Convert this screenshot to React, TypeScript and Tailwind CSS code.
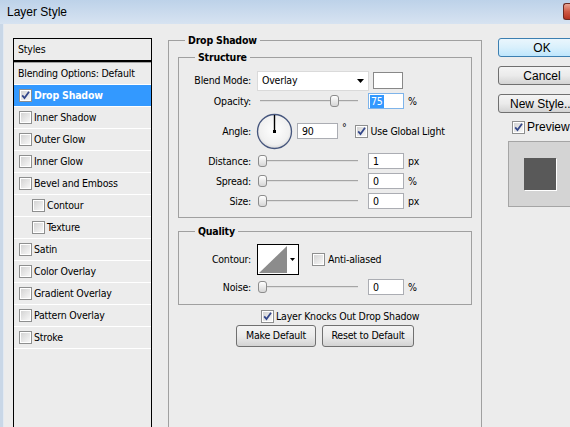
import React from "react";

const F = "font-['DejaVu_Sans_Condensed','Liberation_Sans',Arial,sans-serif]";
const FB = "font-['Liberation_Sans',Arial,sans-serif]";

function Check({ checked = false }: { checked?: boolean }) {
  return (
    <span className="flex h-[13px] w-[13px] shrink-0 items-center justify-center border border-[#8e8f8f] bg-white">
      <span className="flex h-[9px] w-[9px] items-center justify-center bg-linear-to-br from-[#d4d4d4] to-[#f7f7f7]">
        {checked && (
          <svg width="9" height="9" viewBox="0 0 9 9">
            <path d="M1.2 4.4 L3.5 7 L8 0.8" fill="none" stroke="#33478a" strokeWidth="1.8" />
          </svg>
        )}
      </span>
    </span>
  );
}

function Slider({ pos }: { pos: number }) {
  return (
    <div className="relative h-[14px] w-[100px] shrink-0">
      <div className="absolute left-[2px] right-0 top-[6px] h-[2px] border-t border-[#a5a5a5] bg-[#dedede]" />
      <div
        className="absolute top-[1px] h-[12px] w-[9px] rounded-[3px] border border-[#8c8c8c] bg-linear-to-b from-white to-[#d6d6d6]"
        style={{ left: pos }}
      />
    </div>
  );
}

function Num({ v }: { v: string }) {
  return (
    <div className="ml-[10px] flex h-[16px] w-[36px] shrink-0 items-center border border-[#abadb3] bg-white pl-[4px] leading-none">
      {v}
    </div>
  );
}

function Label({ children }: { children: React.ReactNode }) {
  return <span className="w-[72px] shrink-0 text-right leading-none">{children}</span>;
}

function SliderRow({ label, pos, v, unit }: { label: string; pos: number; v: string; unit: string }) {
  return (
    <div className="flex h-[20px] items-center">
      <Label>{label}</Label>
      <div className="ml-[7px]">
        <Slider pos={pos} />
      </div>
      <Num v={v} />
      <span className="ml-[4px] leading-none">{unit}</span>
    </div>
  );
}

function Dial() {
  return (
    <svg width="37" height="37" viewBox="0 0 37 37">
      <defs>
        <radialGradient id="dg" cx="50%" cy="45%" r="55%">
          <stop offset="0%" stopColor="#ffffff" />
          <stop offset="80%" stopColor="#f0f0f0" />
          <stop offset="100%" stopColor="#d8d8d8" />
        </radialGradient>
      </defs>
      <circle cx="18.5" cy="18.5" r="17" fill="url(#dg)" stroke="#46567d" strokeWidth="1.3" />
      <line x1="18.5" y1="18.5" x2="18.5" y2="2" stroke="#000" strokeWidth="1.4" />
      <rect x="17" y="17" width="3" height="3" fill="#000" />
    </svg>
  );
}

function ContourPicker() {
  return (
    <svg width="42" height="31" viewBox="0 0 42 31" className="shrink-0">
      <rect x="0.5" y="0.5" width="41" height="30" fill="#fff" stroke="#000" />
      <polygon points="2,29 30,2 30,29" fill="#8c8c8c" />
      <polygon points="33,14 38,14 35.5,17" fill="#000" />
    </svg>
  );
}

const grayBtn =
  "flex items-center justify-center rounded-[3px] border border-[#707070] bg-linear-to-b from-[#f4f4f4] via-[#ebebeb] to-[#d3d3d3]";

export default function App() {
  const items: { t: string; sub?: boolean }[] = [
    { t: "Inner Shadow" },
    { t: "Outer Glow" },
    { t: "Inner Glow" },
    { t: "Bevel and Emboss" },
    { t: "Contour", sub: true },
    { t: "Texture", sub: true },
    { t: "Satin" },
    { t: "Color Overlay" },
    { t: "Gradient Overlay" },
    { t: "Pattern Overlay" },
    { t: "Stroke" },
  ];

  return (
    <div className={`h-[427px] w-[570px] overflow-hidden bg-[#ececec] text-[10.5px] tracking-[-0.2px] text-black ${F}`}>
      {/* Title bar */}
      <div className="flex h-[24px] items-start bg-linear-to-b from-[#bdd2e9] to-[#d7e3f1]">
        <span className={`${FB} ml-[7px] mt-[5px] text-[12px] leading-[14px] tracking-normal`}>Layer Style</span>
        <div className="ml-auto mt-[3px] h-[17px] w-[7px] rounded-l-[3px] border border-r-0 border-[#6d2a22] bg-linear-to-b from-[#e8a493] via-[#cf5a45] to-[#b4321f]" />
      </div>

      <div className="flex h-[403px]">
        <div className="w-[3px] shrink-0 bg-[#c9d7e7]" />
        <div className="w-[1px] shrink-0 bg-[#e2e9f2]" />

        {/* Styles list */}
        <div className="ml-[9px] mt-[14px] h-[400px] w-[139px] shrink-0 border border-black">
          <div className="flex h-[21px] items-center pl-[4px]">Styles</div>
          <div className="h-[2px] bg-black" />
          <div className="h-[1px] bg-[#a0a0a0]" />
          <div className="flex h-[22px] items-center border-b border-white pl-[4px]">Blending Options: Default</div>
          <div className="flex h-[22px] items-center gap-[2px] border-b border-white bg-[#3399ff] pl-[5px] font-bold text-white">
            <Check checked />
            <span>Drop Shadow</span>
          </div>
          {items.map((it) => (
            <div
              key={it.t}
              className={
                it.sub
                  ? "flex h-[22px] items-center gap-[2px] border-b border-white pl-[18px]"
                  : "flex h-[22px] items-center gap-[2px] border-b border-white pl-[5px]"
              }
            >
              <Check />
              <span>{it.t}</span>
            </div>
          ))}
        </div>

        {/* Drop Shadow group */}
        <fieldset className="ml-[16px] mt-[9px] h-[420px] w-[314px] shrink-0 border border-[#a0a0a0] px-[9px]">
          <legend className="ml-[7px] px-[3px] font-bold leading-[14px]">Drop Shadow</legend>

          <fieldset className="mt-[3px] w-[294px] border border-[#a0a0a0] pb-[6px]">
            <legend className="ml-[16px] px-[3px] font-bold leading-[14px]">Structure</legend>
            <div className="pt-[6px]">
              <div className="flex h-[21px] items-center">
                <Label>Blend Mode:</Label>
                <div className="ml-[6px] flex h-[20px] w-[112px] shrink-0 items-center justify-between border border-[#dadada] bg-white pl-[4px] pr-[4px]">
                  <span className="leading-none">Overlay</span>
                  <svg width="7" height="4" viewBox="0 0 7 4">
                    <polygon points="0,0 7,0 3.5,4" fill="#000" />
                  </svg>
                </div>
                <div className="ml-[4px] h-[17px] w-[30px] shrink-0 border border-[#888] bg-white" />
              </div>

              <div className="flex h-[20px] items-center">
                <Label>Opacity:</Label>
                <div className="ml-[7px]">
                  <Slider pos={72} />
                </div>
                <div className="ml-[10px] flex h-[16px] w-[36px] shrink-0 items-center border border-[#7eb4ea] bg-white pl-[1px]">
                  <span className="bg-[#3399ff] px-[1px] leading-[13px] text-white">75</span>
                </div>
                <span className="ml-[4px] leading-none">%</span>
              </div>

              <div className="flex h-[40px] items-center">
                <Label>Angle:</Label>
                <div className="ml-[5px] flex">
                  <Dial />
                </div>
                <div className="ml-[4px] flex h-[16px] w-[41px] shrink-0 items-center border border-[#abadb3] bg-white pl-[4px] leading-none">
                  90
                </div>
                <span className="mb-[8px] ml-[4px] leading-none">°</span>
                <div className="ml-[8px] flex items-center gap-[3px]">
                  <Check checked />
                  <span className="leading-none">Use Global Light</span>
                </div>
              </div>

              <SliderRow label="Distance:" pos={0} v="1" unit="px" />
              <SliderRow label="Spread:" pos={0} v="0" unit="%" />
              <SliderRow label="Size:" pos={0} v="0" unit="px" />
            </div>
          </fieldset>

          <fieldset className="mt-[6px] w-[294px] border border-[#a0a0a0] pb-[7px]">
            <legend className="ml-[16px] px-[3px] font-bold leading-[14px]">Quality</legend>
            <div className="mt-[6px] flex h-[31px] items-center">
              <Label>Contour:</Label>
              <div className="ml-[6px] flex">
                <ContourPicker />
              </div>
              <div className="ml-[13px] flex items-center gap-[3px]">
                <Check />
                <span className="leading-none">Anti-aliased</span>
              </div>
            </div>
            <div className="mt-[2px]">
              <SliderRow label="Noise:" pos={0} v="0" unit="%" />
            </div>
          </fieldset>

          <div className="ml-[83px] mt-[3px] flex h-[16px] items-center gap-[2px]">
            <Check checked />
            <span className="leading-none">Layer Knocks Out Drop Shadow</span>
          </div>

          <div className="mt-[1px] flex justify-center gap-[6px]">
            <div className={`${grayBtn} h-[22px] w-[80px]`}>Make Default</div>
            <div className={`${grayBtn} h-[22px] w-[92px]`}>Reset to Default</div>
          </div>
        </fieldset>

        {/* Right column */}
        <div className={`ml-[16px] mt-[14px] flex w-[88px] shrink-0 flex-col ${FB} text-[12px] tracking-normal`}>
          <div className="flex h-[19px] items-center justify-center rounded-[3px] border border-[#3c7fb1] bg-linear-to-b from-[#eaf6fd] via-[#d9f0fc] to-[#bee6fd] leading-none">
            OK
          </div>
          <div className={`${grayBtn} mt-[9px] h-[19px] leading-none`}>Cancel</div>
          <div className={`${grayBtn} mt-[9px] h-[19px] leading-none`}>New Style...</div>
          <div className="mt-[6px] flex h-[16px] items-center gap-[2px] pl-[14px]">
            <Check checked />
            <span className="leading-none">Preview</span>
          </div>
          <div className="ml-[10px] mt-[6px] flex h-[66px] w-[64px] items-center justify-center border border-[#a5a5a5] bg-[#d4d4d4]">
            <div className="h-[32px] w-[32px] bg-[#595959] shadow-[1px_1px_0_#ffffff]" />
          </div>
        </div>
      </div>
    </div>
  );
}
